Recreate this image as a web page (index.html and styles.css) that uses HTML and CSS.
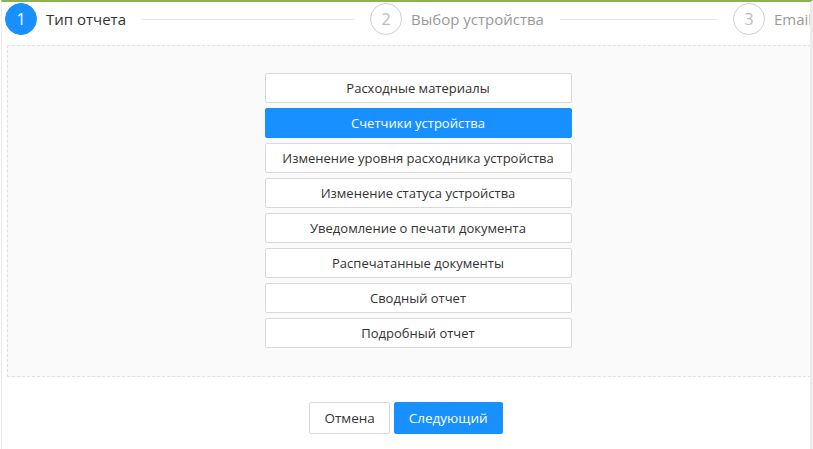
FILE: index.html
```html
<!DOCTYPE html>
<html lang="ru">
<head>
    <meta charset="UTF-8">
    <meta name="viewport" content="width=device-width, initial-scale=1.0">
    <title>Мастер отчета</title>
    <link rel="stylesheet" href="styles.css">
</head>
<body>
    <div class="frame">
        <div class="steps">
            <div class="step step-first step-active">
                <span class="step-icon">1</span>
                <span class="step-title">Тип отчета</span>
                <span class="step-line"></span>
            </div>
            <div class="step step-second">
                <span class="step-icon">2</span>
                <span class="step-title">Выбор устройства</span>
                <span class="step-line"></span>
            </div>
            <div class="step step-last">
                <span class="step-icon">3</span>
                <span class="step-title">Email</span>
            </div>
        </div>

        <div class="report-box">
            <div class="report-list">
                <button class="report-item">Расходные материалы</button>
                <button class="report-item selected">Счетчики устройства</button>
                <button class="report-item">Изменение уровня расходника устройства</button>
                <button class="report-item">Изменение статуса устройства</button>
                <button class="report-item">Уведомление о печати документа</button>
                <button class="report-item">Распечатанные документы</button>
                <button class="report-item">Сводный отчет</button>
                <button class="report-item">Подробный отчет</button>
            </div>
        </div>

        <div class="actions">
            <button class="btn">Отмена</button>
            <button class="btn btn-primary">Следующий</button>
        </div>
    </div>
</body>
</html>
```

FILE: styles.css
```css
body {
    margin: 0;
    font-family: "Open Sans", "Noto Sans", sans-serif;
    background: #fff;
    color: #333;
}
.frame {
    margin-left: 1px;
    height: 447px;
    border-top: 2px solid #8db24f;
    border-left: 1px solid #ececec;
    border-right: 3px solid #ececec;
    overflow: hidden;
}
.steps {
    display: flex;
    padding: 1px 0 0 3px;
    margin-bottom: 10px;
    white-space: nowrap;
}
.step {
    display: flex;
    align-items: center;
    height: 32px;
}
.step-first {
    flex: 0 0 349px;
}
.step-second {
    flex: 0 0 347px;
    padding-left: 16px;
}
.step-last {
    flex: none;
    padding-left: 16px;
}
.step-icon {
    width: 30px;
    height: 30px;
    border: 1px solid #cfcfcf;
    border-radius: 50%;
    display: flex;
    justify-content: center;
    align-items: center;
    font-size: 16px;
    color: #bdbdbd;
    margin-right: 9px;
    flex: none;
}
.step-active .step-icon {
    background: #1890ff;
    border-color: #1890ff;
    color: #fff;
}
.step-title {
    font-size: 15px;
    color: #999;
    padding-right: 16px;
}
.step-active .step-title {
    color: #333;
}
.step-line {
    flex: 1;
    height: 1px;
    background: #e8e8e8;
}
.report-box {
    margin-left: 5px;
    margin-right: -1px;
    background: #fafafa;
    border: 1px dashed #e0e0e0;
    padding: 27px 0 28px 18px;
    display: flex;
    justify-content: center;
}
.report-list {
    width: 307px;
    display: flex;
    flex-direction: column;
    gap: 5px;
}
.report-item {
    height: 30px;
    background: #fff;
    border: 1px solid #d9d9d9;
    border-radius: 2px;
    font-family: inherit;
    font-size: 13px;
    color: #333;
    padding: 0;
    cursor: pointer;
}
.report-item.selected {
    background: #1890ff;
    border-color: #1890ff;
    color: #fff;
}
.actions {
    display: flex;
    justify-content: center;
    gap: 4px;
    margin-top: 25px;
}
.btn {
    height: 32px;
    padding: 0 14px;
    background: #fff;
    border: 1px solid #d9d9d9;
    border-radius: 2px;
    font-family: inherit;
    font-size: 13.5px;
    color: #333;
    cursor: pointer;
}
.btn-primary {
    background: #1890ff;
    border-color: #1890ff;
    color: #fff;
}
```
